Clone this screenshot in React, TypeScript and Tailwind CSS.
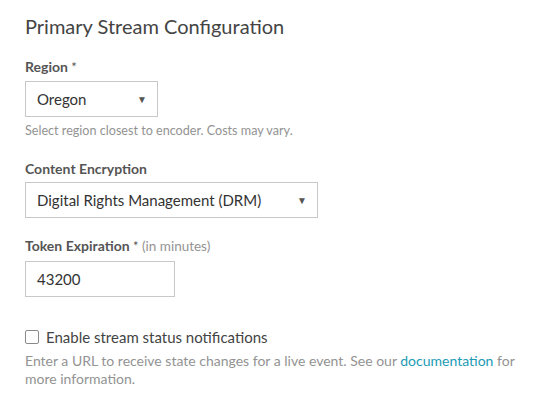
export default function App() {
  return (
    <div className="min-h-screen bg-white font-['Lato','Open_Sans',sans-serif] pl-[25px] pr-[20px] pt-[12px] text-[#555]">
      <h1 className="text-[20px] leading-[28px] text-[#444]">Primary Stream Configuration</h1>

      <label className="block mt-[18px] text-[14px] leading-[18px] font-bold text-[#555]">
        Region <span className="font-normal text-[13px]">*</span>
      </label>
      <div className="mt-[5px] w-[133px] h-[36px] border border-[#c8c8c8] flex items-center justify-between pl-[11px] pr-[10px] text-[15px] text-[#333]">
        <span>Oregon</span>
        <span className="text-[10px] text-[#555]">▼</span>
      </div>
      <p className="mt-[5px] text-[12.6px] leading-[18px] text-[#939393]">
        Select region closest to encoder. Costs may vary.
      </p>

      <label className="block mt-[20px] text-[14px] leading-[18px] font-bold text-[#555]">
        Content Encryption
      </label>
      <div className="mt-[4px] w-[293px] h-[36px] border border-[#c8c8c8] flex items-center justify-between pl-[11px] pr-[10px] text-[15px] text-[#333]">
        <span>Digital Rights Management (DRM)</span>
        <span className="text-[10px] text-[#555]">▼</span>
      </div>

      <label className="block mt-[19px] text-[14px] leading-[18px] font-bold text-[#555]">
        Token Expiration <span className="font-normal text-[13px]">*</span>{' '}
        <span className="font-normal text-[13.5px] text-[#939393]">(in minutes)</span>
      </label>
      <div className="mt-[6px] w-[150px] h-[36px] border border-[#c8c8c8] flex items-center px-[11px] text-[15px] text-[#333]">
        43200
      </div>

      <div className="mt-[30px] flex items-center gap-[7px] h-[20px]">
        <span className="w-[14px] h-[14px] rounded-[2px] border border-[#8a8a8a] bg-white" />
        <span className="text-[15px] leading-[20px] text-[#444]">Enable stream status notifications</span>
      </div>
      <p className="mt-[5px] text-[14px] leading-[18px] text-[#939393]">
        Enter a URL to receive state changes for a live event. See our{' '}
        <a className="text-[#1b9ab5]">documentation</a> for more information.
      </p>
    </div>
  );
}
